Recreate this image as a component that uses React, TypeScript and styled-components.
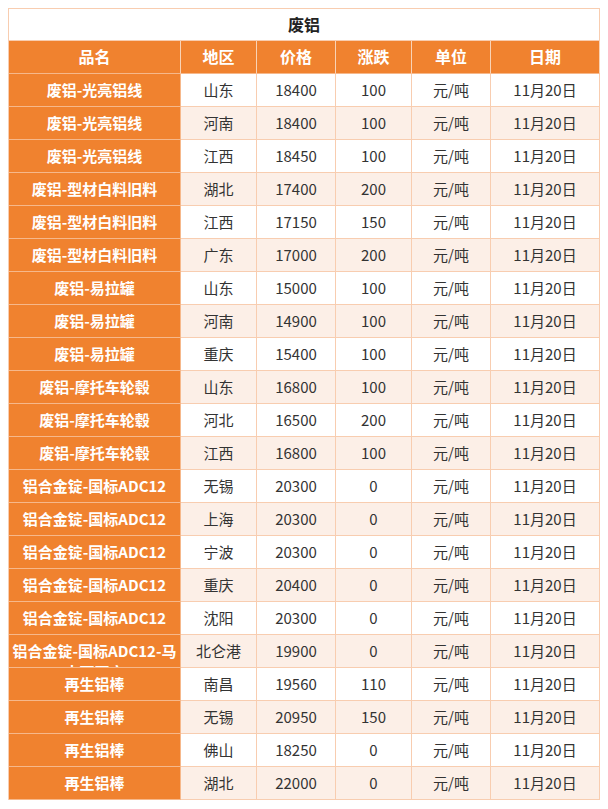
import * as React from "react";
import styled, { createGlobalStyle } from "styled-components";

const GlobalStyle = createGlobalStyle`
  body {
    margin: 8px;
    background: #ffffff;
    font-family: "Noto Sans CJK SC", "Noto Sans", sans-serif;
  }
`;

const ORANGE = "#f0822f";
const LINE = "#f8cdb0";

const Sheet = styled.div`
  display: grid;
  grid-template-columns: 172px 76px 79px 76px 79px 1fr;
  border-top: 1px solid ${LINE};
  border-left: 1px solid ${LINE};
  box-sizing: border-box;
`;

const Title = styled.div`
  grid-column: 1 / -1;
  height: 32px;
  box-sizing: border-box;
  border-right: 1px solid ${LINE};
  border-bottom: 1px solid ${LINE};
  text-align: center;
  line-height: 30px;
  font-size: 16px;
  font-weight: bold;
  color: #222;
  background: #ffffff;
`;

const Head = styled.div`
  height: 33px;
  box-sizing: border-box;
  border-right: 1px solid #f9d3b6;
  border-bottom: 1px solid #f6b88b;
  background: ${ORANGE};
  color: #ffffff;
  font-size: 16px;
  font-weight: bold;
  text-align: center;
  line-height: 31px;
`;

const Cell = styled.div<{ $name?: boolean; $odd?: boolean }>`
  height: 33px;
  box-sizing: border-box;
  overflow: hidden;
  padding-top: 5px;
  line-height: 21px;
  border-right: 1px solid ${(p) => (p.$name ? "#f6b88b" : LINE)};
  border-bottom: 1px solid ${(p) => (p.$name ? "#f6b88b" : LINE)};
  background: ${(p) => (p.$name ? ORANGE : p.$odd ? "#ffffff" : "#fcefe7")};
  color: ${(p) => (p.$name ? "#ffffff" : "#333333")};
  font-weight: ${(p) => (p.$name ? "bold" : "normal")};
  font-size: 15px;
  text-align: center;
  word-break: break-all;
`;

const rows: [string, string, string, string][] = [
  ["废铝-光亮铝线", "山东", "18400", "100"],
  ["废铝-光亮铝线", "河南", "18400", "100"],
  ["废铝-光亮铝线", "江西", "18450", "100"],
  ["废铝-型材白料旧料", "湖北", "17400", "200"],
  ["废铝-型材白料旧料", "江西", "17150", "150"],
  ["废铝-型材白料旧料", "广东", "17000", "200"],
  ["废铝-易拉罐", "山东", "15000", "100"],
  ["废铝-易拉罐", "河南", "14900", "100"],
  ["废铝-易拉罐", "重庆", "15400", "100"],
  ["废铝-摩托车轮毂", "山东", "16800", "100"],
  ["废铝-摩托车轮毂", "河北", "16500", "200"],
  ["废铝-摩托车轮毂", "江西", "16800", "100"],
  ["铝合金锭-国标ADC12", "无锡", "20300", "0"],
  ["铝合金锭-国标ADC12", "上海", "20300", "0"],
  ["铝合金锭-国标ADC12", "宁波", "20300", "0"],
  ["铝合金锭-国标ADC12", "重庆", "20400", "0"],
  ["铝合金锭-国标ADC12", "沈阳", "20300", "0"],
  ["铝合金锭-国标ADC12-马来西亚产", "北仑港", "19900", "0"],
  ["再生铝棒", "南昌", "19560", "110"],
  ["再生铝棒", "无锡", "20950", "150"],
  ["再生铝棒", "佛山", "18250", "0"],
  ["再生铝棒", "湖北", "22000", "0"],
];

const headers = ["品名", "地区", "价格", "涨跌", "单位", "日期"];

export default function App() {
  return (
    <>
      <GlobalStyle />
      <Sheet>
        <Title>废铝</Title>
        {headers.map((h) => (
          <Head key={h}>{h}</Head>
        ))}
        {rows.map(([name, area, price, change], i) => {
          const odd = i % 2 === 0;
          return (
            <React.Fragment key={i}>
              <Cell $name>{name}</Cell>
              <Cell $odd={odd}>{area}</Cell>
              <Cell $odd={odd}>{price}</Cell>
              <Cell $odd={odd}>{change}</Cell>
              <Cell $odd={odd}>元/吨</Cell>
              <Cell $odd={odd}>11月20日</Cell>
            </React.Fragment>
          );
        })}
      </Sheet>
    </>
  );
}
